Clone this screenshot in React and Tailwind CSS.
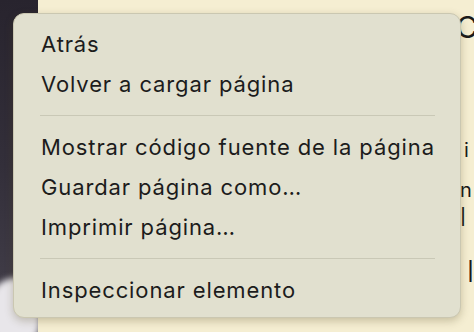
import React from "react";

const groups = [
  ["Atrás", "Volver a cargar página"],
  ["Mostrar código fuente de la página", "Guardar página como…", "Imprimir página…"],
  ["Inspeccionar elemento"],
];

export default function App() {
  return (
    <div className="relative w-[474px] h-[332px] overflow-hidden flex" style={{ fontFamily: "Inter, 'Noto Sans', sans-serif" }}>
      {/* page behind the menu */}
      <div className="relative w-[38px] h-full bg-gradient-to-b from-[#28242e] via-[#332f3a] to-[#45414c] overflow-hidden">
        <div className="absolute -left-[10px] top-[278px] w-[50px] h-[70px] rounded-full bg-[#e8e6ea] blur-[3px]" />
      </div>
      <div className="flex-1 h-full bg-[#f5eed2] flex justify-end overflow-hidden">
        <div className="w-[14px] flex flex-col text-[#1a1a1a] leading-none">
          <span className="text-[30px] -ml-[4px] mt-[12px]">C</span>
          <span className="text-[20px] ml-[4px] mt-[98px]">i</span>
          <span className="text-[20px] mt-[20px]">n</span>
          <span className="text-[26px] font-light mt-[4px]">l</span>
          <span className="text-[30px] font-light ml-[7px] mt-[26px]">l</span>
        </div>
      </div>

      {/* context menu */}
      <div className="absolute left-[13px] top-[13px] w-[448px] h-[305px] rounded-[11px] bg-[#e1e0cf] border border-[#cac7b1] shadow-[0_3px_8px_rgba(80,70,30,0.28)] px-[14px] pt-[10px] flex flex-col">
        {groups.map((g, gi) => (
          <div key={gi} className="flex flex-col">
            {gi > 0 && <div className="h-[1px] bg-[#c9c8b6] ml-[12px] mr-[11px] my-[11px]" />}
            {g.map((item) => (
              <div key={item} className="h-[40px] flex items-center pl-[13px] whitespace-nowrap text-[22px] text-[#1c1c1c] tracking-[0.04em]">
                {item}
              </div>
            ))}
          </div>
        ))}
      </div>
    </div>
  );
}
